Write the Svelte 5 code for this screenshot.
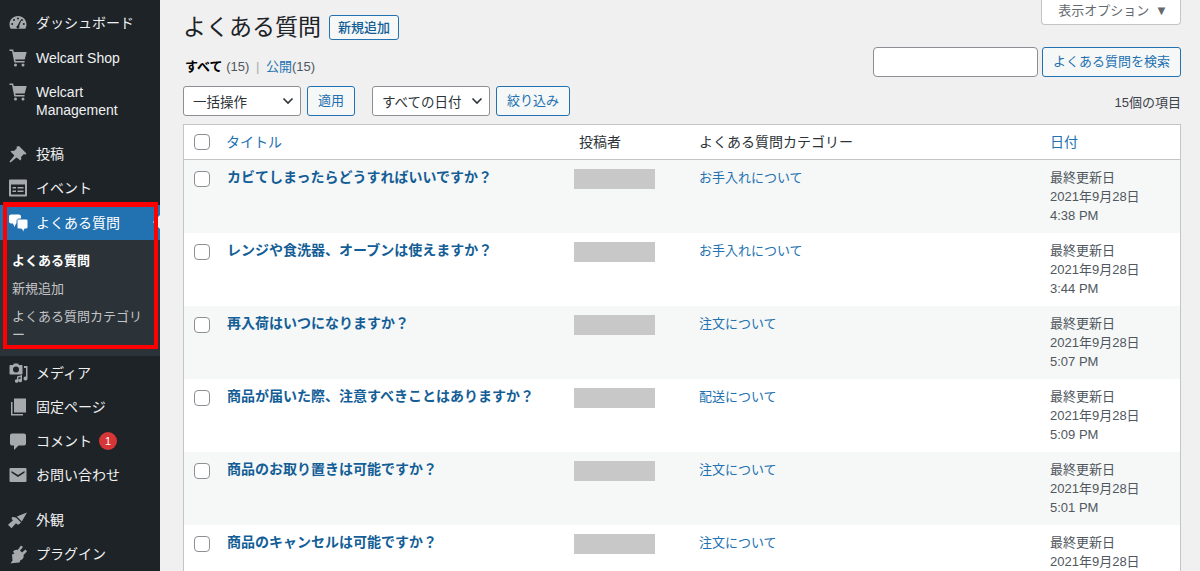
<script>
  const menuTop = [
    { label: 'ダッシュボード', icon: 'dashboard' },
    { label: 'Welcart Shop', icon: 'cart' },
    { label: 'Welcart Management', icon: 'cart', wide: true }
  ]
  const menuPosts = [
    { label: '投稿', icon: 'pin' },
    { label: 'イベント', icon: 'event' }
  ]
  const menuAfter = [
    { label: 'メディア', icon: 'media' },
    { label: '固定ページ', icon: 'pages' },
    { label: 'コメント', icon: 'comment', badge: 1 },
    { label: 'お問い合わせ', icon: 'mail' }
  ]
  const menuLast = [
    { label: '外観', icon: 'brush' },
    { label: 'プラグイン', icon: 'plugin' }
  ]

  const rows = [
    { title: 'カビてしまったらどうすればいいですか？', cat: 'お手入れについて', time: '4:38 PM' },
    { title: 'レンジや食洗器、オーブンは使えますか？', cat: 'お手入れについて', time: '3:44 PM' },
    { title: '再入荷はいつになりますか？', cat: '注文について', time: '5:07 PM' },
    { title: '商品が届いた際、注意すべきことはありますか？', cat: '配送について', time: '5:09 PM' },
    { title: '商品のお取り置きは可能ですか？', cat: '注文について', time: '5:01 PM' },
    { title: '商品のキャンセルは可能ですか？', cat: '注文について', time: '5:01 PM' }
  ]
</script>

{#snippet icon(name)}
  <svg class="ico" viewBox="0 0 20 20" width="20" height="20" fill="currentColor" aria-hidden="true">
    {#if name === 'dashboard'}
      <path fill-rule="evenodd" d="M10 3C5 3 1.500 6.800 1.500 11.500c0 1.600.4 3 1.200 4.200h14.600c.8-1.200 1.200-2.600 1.200-4.200C18.500 6.800 15 3 10 3zM10 4.500a1 1 0 1 1 0 2 1 1 0 0 1 0-2zM6 6a1 1 0 1 1 0 2 1 1 0 0 1 0-2zM14 6a1 1 0 1 1 0 2 1 1 0 0 1 0-2zM4.200 10a1 1 0 1 1 0 2 1 1 0 0 1 0-2zM15.800 10a1 1 0 1 1 0 2 1 1 0 0 1 0-2zM12.300 7.200l.9.4-2 5.400a1.500 1.500 0 1 1-1.600-.6z"/>
    {:else if name === 'cart'}
      <path d="M1.500 1.500h3.700l.5 2.500h13l-2 7.500H7.300l.3 1.500h9v1.500H6.300L4 3H1.500z"/>
      <circle cx="7.500" cy="17" r="1.500"/><circle cx="15" cy="17" r="1.500"/>
    {:else if name === 'pin'}
      <path d="M11 2l7.500 7.500-1.300 1.300-1.200-.7-3 3c.5 1.500.3 2.700-.5 3.500L8.500 13.600 2.500 18.500l-1-1 4.900-6L2.500 7.500c.8-.8 2-1 3.500-.5l3-3-.7-1.200z"/>
    {:else if name === 'event'}
      <path fill-rule="evenodd" d="M2 1.500h16a1 1 0 0 1 1 1v15a1 1 0 0 1-1 1H2a1 1 0 0 1-1-1v-15a1 1 0 0 1 1-1zM3 6.500V16.500h14V6.500zM4.500 9H8v1.500H4.500zM9.500 9h6v1.500h-6zM4.500 12.500H8V14H4.500zM9.500 12.500h6V14h-6z"/>
    {:else if name === 'chat'}
      <path d="M3 1.500h8c1.100 0 2 .9 2 2v5c0 1.100-.9 2-2 2H8L6.500 14 5 10.500H3c-1.100 0-2-.9-2-2v-5c0-1.100.9-2 2-2z"/>
      <path stroke="#2271b1" stroke-width="1" d="M11 6h7c1.100 0 2 .9 2 2v6c0 1.100-.9 2-2 2h-1.500L15.500 19.500 13.500 16H11c-1.100 0-2-.9-2-2V8c0-1.100.9-2 2-2z"/>
    {:else if name === 'media'}
      <path fill-rule="evenodd" d="M2.500 2H5l1-1.500h4L11 2h2.500a1 1 0 0 1 1 1v7.500a1 1 0 0 1-1 1h-11a1 1 0 0 1-1-1V3a1 1 0 0 1 1-1zM8 3.500a3 3 0 1 0 0 6 3 3 0 0 0 0-6z"/>
      <path d="M16 3h3.500v12.500a2 2 0 1 1-1.500-1.900V5H16zM9 13.500l5-1.500v5.500a1.800 1.800 0 1 1-1.400-1.700V14l-2.200.6v3.400a1.800 1.800 0 1 1-1.400-1.700z"/>
    {:else if name === 'pages'}
      <path d="M6 1.500h12v14H6zM3 5h1.500v12H15v1.500H3z"/>
    {:else if name === 'comment'}
      <path d="M4 2.500h12a2 2 0 0 1 2 2v8a2 2 0 0 1-2 2h-5.500L6 19v-4.500H4a2 2 0 0 1-2-2v-8a2 2 0 0 1 2-2z"/>
    {:else if name === 'mail'}
      <path fill-rule="evenodd" d="M2.500 3h15a1 1 0 0 1 1 1v12a1 1 0 0 1-1 1h-15a1 1 0 0 1-1-1V4a1 1 0 0 1 1-1zM3.500 6v1.800L10 12l6.500-4.200V6L10 10z"/>
    {:else if name === 'brush'}
      <path d="M19 2.500l-5.200 9-5-5zM8 7.500l5 5-1.700 1.500c-.7.700-1.800.7-2.500 0l-.8-.8-4.500 5-3.500-3.400 5-4.500-.8-.8c-.7-.7-.7-1.800 0-2.500z"/>
    {:else if name === 'plugin'}
      <path d="M13 1.500l2 1.500-3 3.500 2 2 3.500-3 1.500 2-3.500 3.500c.6 2-.2 3.700-1.800 4.700L12.500 16l-1 2.500-6 .5-3 .5 2-3-.5-6 2.500-1-1.500-1.800c1-1.600 2.700-2.400 4.700-1.800z"/>
    {/if}
  </svg>
{/snippet}

{#snippet item(m)}
  <li class="item" class:wide={m.wide}>
    {@render icon(m.icon)}
    <span class="lbl">{m.label}</span>
    {#if m.badge}<span class="badge">{m.badge}</span>{/if}
  </li>
{/snippet}

<div class="page">
  <aside>
    <ul class="menu first">
      {#each menuTop as m}{@render item(m)}{/each}
    </ul>
    <ul class="menu sep">
      {#each menuPosts as m}{@render item(m)}{/each}
      <li class="item current">
        {@render icon('chat')}
        <span class="lbl">よくある質問</span>
      </li>
      <li class="sub">
        <a class="on" href="#a">よくある質問</a>
        <a href="#a">新規追加</a>
        <a href="#a">よくある質問カテゴリ<br />ー</a>
      </li>
      {#each menuAfter as m}{@render item(m)}{/each}
    </ul>
    <ul class="menu sep">
      {#each menuLast as m}{@render item(m)}{/each}
    </ul>
    <div class="notch"></div>
    <div class="mark"></div>
  </aside>

  <main>
    <button class="screen-opts">表示オプション <i>▼</i></button>

    <div class="title-row">
      <h1>よくある質問</h1>
      <a class="btn add" href="#a">新規追加</a>
    </div>

    <div class="views-row">
      <p class="views"><b>すべて</b> <span>(15)</span> <em>|</em> <a href="#a">公開</a><span>(15)</span></p>
      <div class="search">
        <input type="text" />
        <button class="btn">よくある質問を検索</button>
      </div>
    </div>

    <div class="filters">
      <div class="select bulk">一括操作
        <svg viewBox="0 0 12 8" width="12" height="8"><path d="M1.500 1.500L6 6l4.500-4.500" fill="none" stroke="#2c3338" stroke-width="1.600"/></svg>
      </div>
      <button class="btn">適用</button>
      <div class="select date">すべての日付
        <svg viewBox="0 0 12 8" width="12" height="8"><path d="M1.500 1.500L6 6l4.500-4.500" fill="none" stroke="#2c3338" stroke-width="1.600"/></svg>
      </div>
      <button class="btn">絞り込み</button>
      <span class="count">15個の項目</span>
    </div>

    <table>
      <colgroup>
        <col style="width:34px" /><col style="width:353px" /><col style="width:120px" /><col style="width:351px" /><col />
      </colgroup>
      <thead>
        <tr>
          <th><span class="cb"></span></th>
          <th><a href="#a">タイトル</a></th>
          <th>投稿者</th>
          <th>よくある質問カテゴリー</th>
          <th><a href="#a">日付</a></th>
        </tr>
      </thead>
      <tbody>
        {#each rows as r}
          <tr>
            <td><span class="cb"></span></td>
            <td><a class="row-title" href="#a">{r.title}</a></td>
            <td><div class="redacted"></div></td>
            <td><a href="#a">{r.cat}</a></td>
            <td class="when">最終更新日<br />2021年9月28日<br />{r.time}</td>
          </tr>
        {/each}
      </tbody>
    </table>
  </main>
</div>

<style>
  :global(html), :global(body) {
    margin: 0;
    height: 571px;
    overflow: hidden;
  }
  .page {
    display: flex;
    height: 571px;
    overflow: hidden;
    background: #f0f0f1;
    color: #3c434a;
    font-family: "Liberation Sans", "Noto Sans CJK JP", sans-serif;
    font-size: 13px;
  }
  a {
    color: #2271b1;
    text-decoration: none;
  }

  aside {
    position: relative;
    flex: 0 0 160px;
    background: #1d2327;
  }
  ul {
    list-style: none;
    margin: 0;
    padding: 0;
  }
  .menu.first {
    padding-top: 6px;
  }
  .menu.first .item:first-child {
    padding-bottom: 9px;
  }
  .menu.sep {
    margin-top: 11px;
  }
  .item {
    display: flex;
    align-items: flex-start;
    min-height: 18px;
    padding: 8px 8px 8px 8px;
    color: #f0f0f1;
    font-size: 14px;
    line-height: 18px;
  }
  .item.wide {
    padding-right: 24px;
    padding-bottom: 7px;
  }
  .ico {
    flex: none;
    margin: -1px 8px -1px 0;
    color: #a7aaad;
  }
  .lbl {
    min-width: 0;
  }
  .current {
    padding-top: 8.500px;
    padding-bottom: 8.500px;
    background: #2271b1;
    color: #fff;
  }
  .current .ico {
    color: #fff;
  }
  .sub {
    padding: 7px 0;
    background: #2c3338;
  }
  .sub a {
    display: block;
    padding: 5px 12px;
    line-height: 18px;
    color: #c3c4c7;
  }
  .sub a.on {
    color: #fff;
    font-weight: 700;
  }
  .badge {
    width: 18px;
    height: 18px;
    margin-left: 7px;
    border-radius: 50%;
    background: #d63638;
    color: #fff;
    font-size: 11px;
    line-height: 18px;
    text-align: center;
  }
  .notch {
    position: absolute;
    top: 215px;
    right: 0;
    border: 7px solid transparent;
    border-right-color: #f0f0f1;
    border-left: 0;
  }
  .mark {
    position: absolute;
    top: 202px;
    left: 3px;
    width: 147px;
    height: 138px;
    border: solid #f00;
    border-width: 5px 4px 4px;
  }

  main {
    flex: 1;
    min-width: 0;
    padding: 0 19px 0 23px;
  }
  .screen-opts {
    float: right;
    box-sizing: border-box;
    width: 140px;
    height: 25px;
    padding: 0 0 8px 4px;
    border: 1px solid #c3c4c7;
    border-top: 0;
    border-radius: 0 0 4px 4px;
    background: #fff;
    color: #646970;
    font: inherit;
  }
  .screen-opts i {
    margin-left: 2px;
    font-style: normal;
    font-size: 13px;
  }
  .title-row {
    display: flex;
    align-items: center;
    gap: 8px;
    padding-top: 12px;
  }
  h1 {
    margin: 0;
    color: #1d2327;
    font-size: 23px;
    font-weight: 400;
    line-height: 30px;
  }
  .btn {
    display: inline-block;
    box-sizing: border-box;
    height: 30px;
    padding: 0 10px;
    border: 1px solid #2271b1;
    border-radius: 3px;
    background: #f6f7f7;
    color: #2271b1;
    font: inherit;
    line-height: 28px;
  }
  .add {
    height: 25px;
    padding: 0 8px;
    line-height: 23px;
    color: #135e96;
    font-weight: 500;
  }
  .views-row {
    display: flex;
    justify-content: space-between;
    margin-top: 5px;
  }
  .views {
    margin: 10px 0 0 2px;
    line-height: 20px;
    color: #50575e;
  }
  .views b {
    color: #000;
  }
  .views em {
    margin: 0 3px;
    font-style: normal;
    color: #a7aaad;
  }
  .search {
    display: flex;
    gap: 4px;
  }
  input {
    box-sizing: border-box;
    width: 165px;
    height: 30px;
    border: 1px solid #8c8f94;
    border-radius: 4px;
    background: #fff;
  }
  .filters {
    display: flex;
    align-items: center;
    margin-top: 9px;
    gap: 6px;
  }
  .select {
    display: flex;
    align-items: center;
    justify-content: space-between;
    box-sizing: border-box;
    width: 118px;
    height: 30px;
    padding: 0 6px 0 9px;
    border: 1px solid #8c8f94;
    border-radius: 3px;
    background: #fff;
    color: #2c3338;
    font-size: 13.500px;
  }
  .select.date {
    margin-left: 11px;
  }
  .count {
    margin-left: auto;
    color: #3c434a;
  }
  table {
    width: 998px;
    margin-top: 8px;
    border: 1px solid #c3c4c7;
    border-collapse: separate;
    border-spacing: 0;
    table-layout: fixed;
    background: #fff;
  }
  th {
    box-sizing: border-box;
    height: 35px;
    padding: 0 8px 2px;
    border-bottom: 1px solid #c3c4c7;
    color: #2c3338;
    font-size: 14px;
    font-weight: 400;
    text-align: left;
  }
  th .cb {
    margin-top: 2px;
  }
  td {
    box-sizing: border-box;
    height: 73px;
    padding: 8px;
    vertical-align: top;
    line-height: 19px;
  }
  tbody tr:nth-child(odd) td {
    background: #f6f7f7;
  }
  .cb {
    display: block;
    box-sizing: border-box;
    width: 16px;
    height: 16px;
    margin-left: 2px;
    border: 1px solid #8c8f94;
    border-radius: 4px;
    background: #fff;
  }
  td .cb {
    margin-top: 3px;
  }
  .row-title {
    color: #135e96;
    font-size: 14px;
    font-weight: 700;
    margin-left: 1px;
  }
  .redacted {
    width: 81px;
    height: 20px;
    margin: 1px 0 0 -5px;
    background: #c8c8c8;
  }
  .when {
    color: #50575e;
  }
</style>
